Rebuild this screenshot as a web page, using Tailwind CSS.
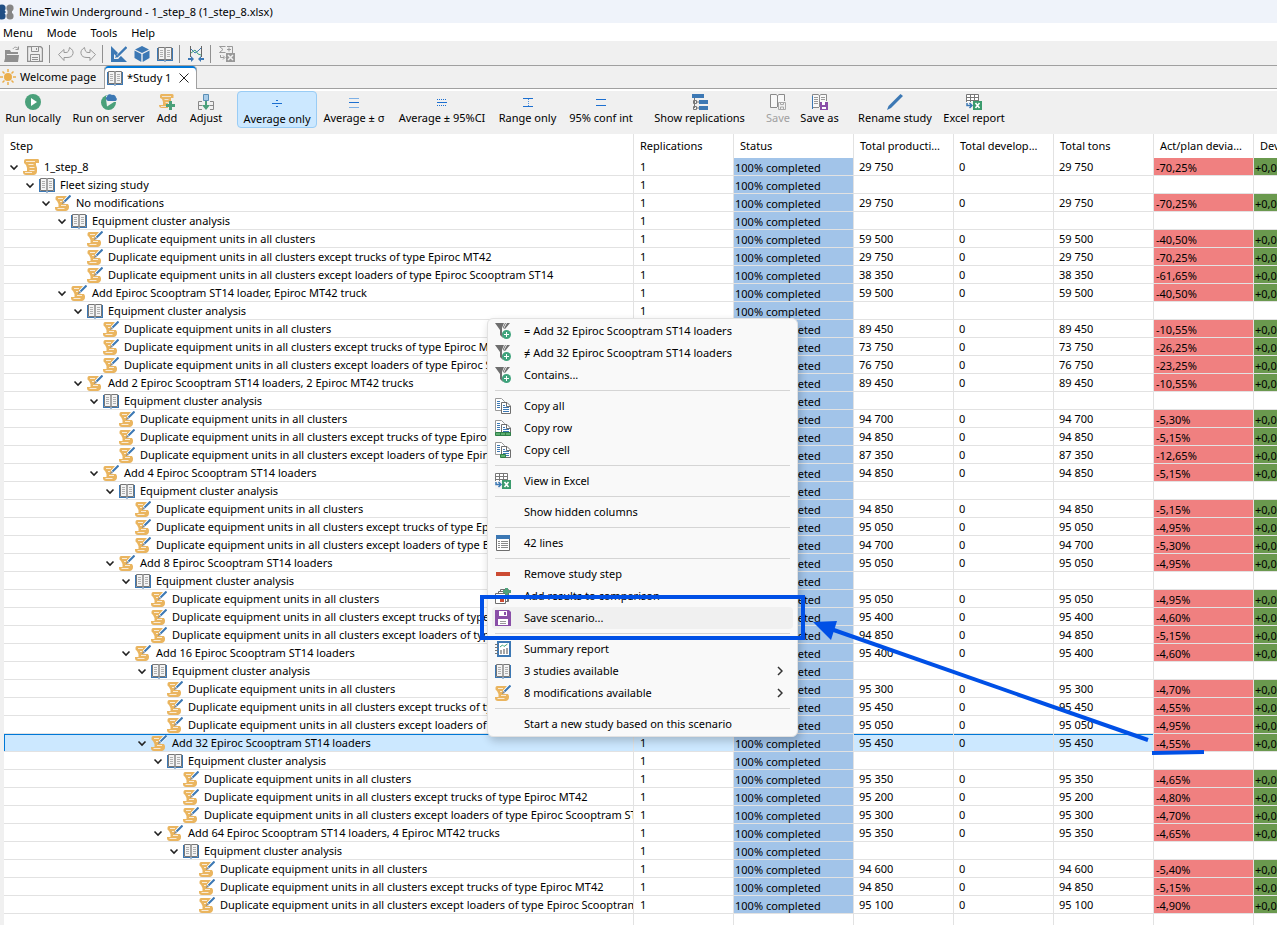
<!DOCTYPE html>
<html lang="en">
  <head>
    <meta charset="UTF-8" />
    <meta name="viewport" content="width=device-width, initial-scale=1.0" />
    <title>MineTwin Underground</title>
    <script src="https://cdn.jsdelivr.net/npm/@tailwindcss/browser@4"></script>
  </head>

  <body
    class="h-screen flex flex-col overflow-hidden bg-white font-['Noto_Sans','Open_Sans',sans-serif] text-[11px] leading-4 text-black"
  >
    <!-- icon sprites -->
    <svg class="hidden">
      <symbol id="scroll" viewBox="0 0 16 16">
        <path fill="#eab55f" d="M3 0h11.500a1.500 1.500 0 0 1 1.500 2v2h-3v2l1 3v3a4 4 0 0 1-3 4H3a3 3 0 0 1-3-3v-1h4V9L3 6 1 4V2a2 2 0 0 1 2-2z" />
        <path stroke="#fff" stroke-opacity=".75" fill="none" d="M3 2.500h9M5.500 5.500h5M6.500 8.500h5M6.500 11.500h5M2 13.500h7" />
      </symbol>
      <symbol id="mod" viewBox="0 0 16 16">
        <path fill="#eab55f" d="M3 1h9L8 6v3h5l1 2v1a4 4 0 0 1-3 4H3a3 3 0 0 1-3-3v-1h3.500V9L2 6 .500 4.500V3A2 2 0 0 1 3 1z" />
        <path stroke="#fff" stroke-opacity=".75" fill="none" d="M3 3.500h5M5 6.500h2M6 10.500h5M2.500 13.500h7" />
        <path stroke="#fff" stroke-width="3.500" fill="none" d="M15.500 .5 9 7" />
        <path stroke="#3c78b4" stroke-width="2" fill="none" d="M15.500 .5 9.500 6.500" />
        <path fill="#8a8a8a" d="M7 9l1.200-3 2 2z" />
      </symbol>
      <symbol id="book" viewBox="0 0 16 16">
        <path fill="#3c78b4" d="M0 2h1v12h6l1 1 1-1h6V2h1v13H9l-1 1-1-1H0z" />
        <path fill="#f4f4f4" stroke="#777" d="M1.500 1.500H7l1 .5 1-.5h5.500v12H9l-1 .5-1-.5H1.500z" />
        <path stroke="#8a8a8a" fill="none" d="M8 2v12" stroke-width="1.500" />
        <path stroke="#b0b0b0" fill="none" d="M3 4.500h3M3 6.500h3M3 8.500h3M3 10.500h3M10 4.500h3M10 6.500h3M10 8.500h3M10 10.500h3" />
      </symbol>
      <symbol id="down" viewBox="0 0 10 8">
        <path d="M1.500 2.500 5 6 8.500 2.500" fill="none" stroke="#222" stroke-width="1.600" />
      </symbol>
      <symbol id="filter" viewBox="0 0 16 16">
        <path fill="#6e6e6e" d="M0 0h9L7 5v4l1 6-3-3V7z" />
        <path fill="#6e6e6e" d="M10 0h1L8 6V4zM12 0h3l-5 6-1-.5z" />
        <circle cx="11.500" cy="11.500" r="4.500" fill="#3fa37c" />
        <path stroke="#fff" fill="none" d="M11.500 9v5M9 11.500h5" />
      </symbol>
      <symbol id="copy" viewBox="0 0 16 16">
        <path fill="#fff" stroke="#999" d="M.5.500h6l3 3v9h-9z" />
        <path stroke="#3c78b4" fill="none" d="M2 3.500h3M2 5.500h3M2 7.500h3M2 9.500h3" />
        <path fill="#fff" stroke="#6e6e6e" d="M6.500 4.500h5.500l3.500 3.500v7.500h-9z" />
        <path stroke="#6e6e6e" fill="none" d="M11.500 4.500v4h4" />
        <path stroke="#3c78b4" fill="none" d="M8 7.500h2M8 9.500h6M8 11.500h6M8 13.500h6" />
      </symbol>
      <symbol id="copyrow" viewBox="0 0 16 16">
        <use href="#copy" />
        <path fill="#5cae6f" stroke="#2f8048" d="M.5 12.500h15v3H.500zM5.500 12.500v3M10.500 12.500v3" />
      </symbol>
      <symbol id="copycell" viewBox="0 0 16 16">
        <use href="#copy" />
        <path fill="#5cae6f" stroke="#2f8048" d="M5.500 12.500h5v3h-5z" />
      </symbol>
      <symbol id="excel" viewBox="0 0 16 16">
        <path fill="#fff" stroke="#777" d="M.5.500h12v9H.500zM4.500.500v9M8.500.500v9M.500 3.500h12M.500 6.500h12" />
        <path fill="#f4f4f4" d="M0 8h7v8H0z" />
        <path stroke="#3c78b4" stroke-width="1.500" fill="none" d="M1 9v2.500h4M3.500 9l2.500 2.500L3.500 14" />
        <path fill="#3b9b6d" d="M7 7h9v9H7z" />
        <path stroke="#fff" stroke-width="1.600" fill="none" d="M9.500 9l4 5M13.500 9l-4 5" />
      </symbol>
      <symbol id="lines" viewBox="0 0 16 16">
        <path fill="#fff" stroke="#6e6e6e" d="M1.500 1.500h13v14h-13z" />
        <path fill="#3c78b4" d="M1 0h14v4H1z" />
        <path stroke="#8a8a8a" fill="none" d="M3 6.500h2M6 6.500h7M3 8.500h2M6 8.500h7M3 10.500h2M6 10.500h7M3 12.500h2M6 12.500h7" />
      </symbol>
      <symbol id="minus" viewBox="0 0 16 16">
        <path fill="#cc4b33" d="M1 6h14v4H1z" />
      </symbol>
      <symbol id="results" viewBox="0 0 16 16">
        <path fill="#fff" stroke="#6e6e6e" d="M5.500 1.500h8v12h-8z" />
        <path fill="#fff" stroke="#6e6e6e" d="M3.500 3.500h9v10h-9z" />
        <path fill="#fff" stroke="#6e6e6e" d="M.5 5.500h10v10H.500z" />
        <path fill="#cc4b33" d="M5 11h4v3H5z" />
        <path stroke="#3c78b4" fill="none" d="M2 8.500h5" />
        <path fill="#4fa27b" d="M10 0h3v2h3v3h-3v3h-3V5H8V2h2z" />
      </symbol>
      <symbol id="floppy" viewBox="0 0 16 16">
        <path fill="currentColor" d="M0 0h14l2 2v14H0z" />
        <path fill="#fff" d="M4 1h8v5H4zM3 9h10v6H3z" />
        <path fill="currentColor" d="M9 2h2v3H9z" />
        <path fill="#999" d="M5 11h6v1H5zM5 13h6v1H5z" />
      </symbol>
      <symbol id="report" viewBox="0 0 16 16">
        <path fill="#fff" stroke="#3c78b4" stroke-width="2" d="M3 1h12v14H3z" />
        <path stroke="#777" fill="none" d="M0 3.500h3M0 6.500h3M0 9.500h3M0 12.500h3" />
        <path stroke="#3fa37c" fill="none" d="M5 6l2.500-2L9 5.500 12.500 3" />
        <path stroke="#888" stroke-width="1.500" fill="none" d="M6 13V9M9 13V8M12 13V7" />
      </symbol>
      <symbol id="run" viewBox="0 0 16 16">
        <circle cx="8" cy="8" r="8" fill="#4aa07a" />
        <path fill="#fff" d="M6 4l6 4-6 4z" />
      </symbol>
      <symbol id="server" viewBox="0 0 16 16">
        <circle cx="7.500" cy="8.500" r="7.500" fill="#4aa07a" />
        <path fill="#f0f0f0" d="M5 5h5v3h3l-7 4.500z" />
        <path fill="#f0f0f0" d="M5 5V2l4-2h7v8H8z" />
        <path fill="#3c78b4" d="M7 7a2.500 2.500 0 0 1-1-4.500A3 3 0 0 1 11 1a3 3 0 0 1 4 2.500A2 2 0 0 1 14.500 7z" />
      </symbol>
      <symbol id="add" viewBox="0 0 16 16">
        <path fill="#eab55f" d="M2 0h11a1.500 1.500 0 0 1 1.500 2v2H12v3L9 9v5H3a3 3 0 0 1-3-3h4V8L3 5 1 4V2a2 2 0 0 1 1-2z" />
        <path stroke="#f0f0f0" stroke-opacity=".8" fill="none" d="M3 2.500h9M5.500 5.500h4M6.500 8.500h3M2 12.500h6" />
        <path fill="#4aa07a" d="M10 7h3v3h3v3h-3v3h-3v-3H7v-3h3z" />
      </symbol>
      <symbol id="adjust" viewBox="0 0 16 16">
        <path fill="#a9cce8" stroke="#5b8fb5" d="M5.500.500h5v6h-5z" />
        <path stroke="#888" fill="none" d="M4 7.500H.500v8h15v-8H12M1 11.500h3M12 11.500h3" />
        <path fill="#f0f0f0" d="M4 14h8v2H4z" />
        <path fill="#4aa07a" d="M7 7h2v4h3l-4 5-4-5h3z" />
      </symbol>
      <symbol id="avg" viewBox="0 0 16 16">
        <path fill="#1c6fd0" d="M3 8h10v1H3zM7 5h2v1H7zM7 11h2v1H7z" />
      </symbol>
      <symbol id="sigma" viewBox="0 0 16 16">
        <path fill="#7db0e6" d="M3 4h10v1H3zM3 13h10v1H3z" />
        <path fill="#1c6fd0" d="M3 8h10v1H3z" />
      </symbol>
      <symbol id="ci" viewBox="0 0 16 16">
        <path stroke="#1c6fd0" stroke-dasharray="1 1" d="M3 5.500h10M3 11.500h10" />
        <path fill="#1c6fd0" d="M3 8h10v1H3z" />
      </symbol>
      <symbol id="range" viewBox="0 0 16 16">
        <path fill="#1c6fd0" d="M3 4h10v1H3zM3 12h10v1H3z" />
        <path stroke="#4f92de" stroke-dasharray="1 1" d="M8.500 5v7" />
      </symbol>
      <symbol id="conf" viewBox="0 0 16 16">
        <path fill="#1c6fd0" d="M3 5h10v1H3zM3 11h10v1H3z" />
      </symbol>
      <symbol id="repl" viewBox="0 0 16 16">
        <path fill="#3c78b4" d="M0 0h12v4H0zM7 6h9v4H7zM7 12h9v4H7z" />
        <path stroke="#777" fill="none" d="M2.500 4v10M1.500 6.500h3v3h-3zM1.500 12.500h3v3h-3zM5 8h2M5 14h2" />
      </symbol>
      <symbol id="booksave" viewBox="0 0 16 16">
        <path fill="#f8f8f8" stroke="#8a8a8a" d="M7 13.500H.500V.500H6l1.500 1L9 .500h5.500V7M7.500 1.500V13" />
      </symbol>
      <symbol id="save" viewBox="0 0 16 16">
        <use href="#booksave" />
        <path fill="#f0f0f0" stroke="#aaa" d="M8.500 8.500h7v7h-7zM10.500 8.500v2h3v-2M10.500 15.500v-2.500h3v2.500" />
      </symbol>
      <symbol id="saveas" viewBox="0 0 16 16">
        <use href="#booksave" />
        <path stroke="#3c78b4" d="M.5 2v13" />
        <path stroke="#999" d="M2 3.500h4M2 5.500h4M2 7.500h4M2 9.500h4M9 3.500h4M9 5.500h4" />
        <path fill="#8a4fa8" d="M8 8h8v8H8z" />
        <path fill="#fff" d="M10 8h3v3h-3zM10 13h4v2h-4z" />
      </symbol>
      <symbol id="rename" viewBox="0 0 16 16">
        <path fill="#3c78b4" d="M13.500 0l2.500 2L4 14l-4 2 1.500-4z" />
      </symbol>
      <symbol id="sun" viewBox="0 0 16 16">
        <circle cx="8" cy="8" r="4" fill="#eaae4c" />
        <path stroke="#eaae4c" stroke-width="1.500" d="M8 0v3M8 13v3M0 8h3M13 8h3M2.500 2.500l2 2M11.500 11.500l2 2M13.500 2.500l-2 2M4.500 11.500l-2 2" />
      </symbol>
      <symbol id="open" viewBox="0 0 16 16">
        <path fill="#8f8f8f" d="M1 4h5l1 2h7v2H3l-2 5zM2 9h13l-1 7H0z" />
        <path stroke="#999" fill="none" d="M9 3c1-2 3-2.500 5-.5M14.500.500v3h-3" />
      </symbol>
      <symbol id="savegray" viewBox="0 0 16 16">
        <path fill="#eee" stroke="#8f8f8f" d="M.5.500h13l2 2v13H.500z" stroke-width="1.400" />
        <path fill="#eee" stroke="#8f8f8f" d="M4.500.500h7v5h-7zM9.500 2v2M3.500 8.500h9v7h-9zM5 11.500h6M5 13.500h6" />
      </symbol>
      <symbol id="undo" viewBox="0 0 16 16">
        <path fill="#f0f0f0" stroke="#999" d="M.5 8.500 6 3.500v3h2c2 0 3-1.500 3.500-5 3 2 4 4 3.500 6-.5 3-3 4-6 4H6v3z" />
      </symbol>
      <symbol id="draft" viewBox="0 0 16 16">
        <path fill="#3c78b4" fill-rule="evenodd" d="M0 0l16 16H0zM3 8v5h5z" />
        <path stroke="#f0f0f0" stroke-width="4" d="M16 1 6 11" />
        <path stroke="#3c78b4" stroke-width="2.400" d="M15.500 1 7 9.500" />
        <path fill="#3c78b4" d="M4 12l1.500-4 2.500 2.500z" />
      </symbol>
      <symbol id="cube" viewBox="0 0 16 16">
        <path fill="#3c78b4" d="M8 0l7 3.500L8 7 1 3.500zM.5 4.500 7.300 8v8L.500 12zM15.500 4.500 8.700 8v8l6.800-4z" />
      </symbol>
      <symbol id="compare" viewBox="0 0 16 16">
        <path stroke="#666" fill="none" d="M2.500 0v11M13.500 0v11" />
        <path stroke="#3c78b4" fill="none" d="M3 3l4 4 3-2 3-3" />
        <path stroke="#3fa37c" fill="none" d="M3 7l4-3 3 4 3 1" />
        <path fill="#3c78b4" d="M0 12h3v-2l3 3-3 3v-2H0zM16 12h-3v-2l-3 3 3 3v-2h3z" />
      </symbol>
      <symbol id="calc" viewBox="0 0 16 16">
        <path stroke="#999" fill="none" d="M6.500.500h-6L4 3.500.500 6.500h6M8 3.500h4M10 1.500v4M1.500 9v2.500H5M4 9.500l2 2-2 2M8 .500h5.500V7" />
        <path fill="#999" d="M7 7h9v9H7z" />
        <path stroke="#f0f0f0" stroke-width="1.500" d="M9 9l5 5M14 9l-5 5" />
      </symbol>
    </svg>

    <!-- title bar -->
    <header class="flex items-center h-[23px] shrink-0 gap-[5px] bg-[#eff3fa]">
      <svg class="w-[14px] h-4" viewBox="0 0 14 16">
        <g fill="#1f4e84">
          <circle cx="2" cy="4" r="3.600" />
          <circle cx="2" cy="12" r="3.600" />
          <path d="M0 5h3l3 3-3 3H0z" />
        </g>
        <g fill="#858585">
          <circle cx="10" cy="4" r="3.600" />
          <circle cx="10" cy="12" r="3.600" />
          <path d="M7 8l3-3h2v6h-2z" />
        </g>
      </svg>
      <h1>MineTwin Underground - 1_step_8 (1_step_8.xlsx)</h1>
    </header>

    <nav class="flex h-[18px] shrink-0 items-end gap-[14px] pl-[3px] bg-white">
      <button>Menu</button>
      <button>Mode</button>
      <button>Tools</button>
      <button>Help</button>
    </nav>

    <div class="flex h-[25px] shrink-0 items-center pt-px pl-1 bg-[#f0f0f0] border-b border-[#a0a0a0]">
      <div class="flex gap-[7px]">
        <button aria-label="Open"><svg class="size-4"><use href="#open" /></svg></button>
        <button aria-label="Save"><svg class="size-4"><use href="#savegray" /></svg></button>
      </div>
      <span class="w-px h-[18px] mx-[6px] bg-[#909090]"></span>
      <div class="flex gap-[6px] pl-[2px]">
        <button aria-label="Undo"><svg class="size-4"><use href="#undo" /></svg></button>
        <button aria-label="Redo"><svg class="size-4 -scale-x-100"><use href="#undo" /></svg></button>
      </div>
      <span class="w-px h-[18px] mx-[6px] bg-[#909090]"></span>
      <div class="flex gap-[7px] pl-[2px]">
        <button aria-label="Layout"><svg class="size-4"><use href="#draft" /></svg></button>
        <button aria-label="3D view"><svg class="size-4"><use href="#cube" /></svg></button>
        <button aria-label="Study"><svg class="size-4"><use href="#book" /></svg></button>
      </div>
      <span class="w-px h-[18px] mx-[6px] bg-[#909090]"></span>
      <button class="pl-[2px]" aria-label="Compare"><svg class="size-4"><use href="#compare" /></svg></button>
      <span class="w-px h-[18px] mx-[6px] bg-[#909090]"></span>
      <button class="pl-[2px]" aria-label="Export"><svg class="size-4"><use href="#calc" /></svg></button>
    </div>

    <!-- tabs -->
    <div class="flex h-[23px] shrink-0 bg-[#f0f0f0]">
      <button class="flex items-center w-[104px] gap-1 border-b border-[#a0a0a0] whitespace-nowrap">
        <svg class="size-4"><use href="#sun" /></svg>Welcome page
      </button>
      <button class="flex items-center w-[93px] gap-1 pl-[2px] bg-white border-x border-[#a0a0a0] rounded-t-sm shadow-[inset_0_2px_#0078d7] whitespace-nowrap">
        <svg class="size-4"><use href="#book" /></svg>*Study 1
        <svg class="size-[10px] ml-1" viewBox="0 0 10 10"><path d="M.5.500l9 9M9.500.500l-9 9" stroke="#222" /></svg>
      </button>
      <div class="grow border-b border-[#a0a0a0]"></div>
    </div>

    <!-- study toolbar -->
    <div id="toolbar" class="flex h-[45px] shrink-0 bg-[#f0f0f0] border-t-2 border-white"></div>

    <main class="grow min-h-0 overflow-hidden pl-1 bg-[#f0f0f0]">
      <table class="w-full h-full table-fixed border-separate border-spacing-0 bg-white">
        <colgroup>
          <col class="w-[630px]" />
          <col class="w-[100px]" />
          <col class="w-[120px]" />
          <col class="w-[100px]" />
          <col class="w-[100px]" />
          <col class="w-[100px]" />
          <col class="w-[100px]" />
          <col />
        </colgroup>
        <thead>
          <tr id="head"></tr>
        </thead>
        <tbody id="rows"></tbody>
      </table>
    </main>

    <!-- context menu -->
    <div
      id="menu"
      role="menu"
      class="absolute left-[487px] top-[318px] w-[311px] flex flex-col px-1 py-px rounded-md border border-[#e2e2e2] bg-[#f9f9f9] shadow-[2px_4px_8px_#00000033]"
    ></div>

    <!-- callout -->
    <svg class="absolute left-0 top-0 w-[1277px] h-[925px] pointer-events-none" fill="none" stroke="#0050e6">
      <rect x="482" y="597" width="321" height="41" stroke-width="4" />
      <path d="M1148 740 828 628" stroke-width="4" />
      <path d="M1152 753 1204 752" stroke-width="4" />
      <path d="M813 622l24-1-6 19z" fill="#0050e6" stroke="none" />
    </svg>

    <script>
      const toolbar = [
        ["w-[66px]", "run", "Run locally"],
        ["w-[85px]", "server", "Run on server"],
        ["w-[32px]", "add", "Add"],
        ["w-[46px]", "adjust", "Adjust"],
        ["w-[80px] ml-2 rounded-sm border border-[#99ccf5] bg-[#cce8ff]", "avg", "Average only"],
        ["w-[74px]", "sigma", "Average ± σ"],
        ["w-[102px]", "ci", "Average ± 95%CI"],
        ["w-[69px]", "range", "Range only"],
        ["w-[78px]", "conf", "95% conf int"],
        ["w-[103px] ml-2", "repl", "Show replications"],
        ["w-[34px] ml-[10px] text-[#a0a0a0]", "save", "Save"],
        ["w-[49px]", "saveas", "Save as"],
        ["w-[86px] ml-2", "rename", "Rename study"],
        ["w-[72px]", "excel", "Excel report"],
      ];

      const heads = ["Step", "Replications", "Status", "Total production", "Total development", "Total tons", "Act/plan deviation", "Dev"];

      const study = "Equipment cluster analysis";
      const rows = [
        [0, "scroll", "1_step_8", "29 750", "-70,25%"],
        [1, "book", "Fleet sizing study"],
      ];

      // step name followed by its own result and the three duplicated variants
      function addStep(depth, name, results) {
        const dup = "Duplicate equipment units in all clusters";
        rows.push([depth, "mod", name, ...results[0]]);
        rows.push([depth + 1, "book", study]);
        rows.push([depth + 2, "mod", dup, ...results[1]]);
        rows.push([depth + 2, "mod", dup + " except trucks of type Epiroc MT42", ...results[2]]);
        rows.push([depth + 2, "mod", dup + " except loaders of type Epiroc Scooptram ST14", ...results[3]]);
      }

      addStep(2, "No modifications", [["29 750", "-70,25%"], ["59 500", "-40,50%"], ["29 750", "-70,25%"], ["38 350", "-61,65%"]]);
      addStep(3, "Add Epiroc Scooptram ST14 loader, Epiroc MT42 truck", [["59 500", "-40,50%"], ["89 450", "-10,55%"], ["73 750", "-26,25%"], ["76 750", "-23,25%"]]);
      addStep(4, "Add 2 Epiroc Scooptram ST14 loaders, 2 Epiroc MT42 trucks", [["89 450", "-10,55%"], ["94 700", "-5,30%"], ["94 850", "-5,15%"], ["87 350", "-12,65%"]]);
      addStep(5, "Add 4 Epiroc Scooptram ST14 loaders", [["94 850", "-5,15%"], ["94 850", "-5,15%"], ["95 050", "-4,95%"], ["94 700", "-5,30%"]]);
      addStep(6, "Add 8 Epiroc Scooptram ST14 loaders", [["95 050", "-4,95%"], ["95 050", "-4,95%"], ["95 400", "-4,60%"], ["94 850", "-5,15%"]]);
      addStep(7, "Add 16 Epiroc Scooptram ST14 loaders", [["95 400", "-4,60%"], ["95 300", "-4,70%"], ["95 450", "-4,55%"], ["95 050", "-4,95%"]]);
      addStep(8, "Add 32 Epiroc Scooptram ST14 loaders", [["95 450", "-4,55%"], ["95 350", "-4,65%"], ["95 200", "-4,80%"], ["95 300", "-4,70%"]]);
      addStep(9, "Add 64 Epiroc Scooptram ST14 loaders, 4 Epiroc MT42 trucks", [["95 350", "-4,65%"], ["94 600", "-5,40%"], ["94 850", "-5,15%"], ["95 100", "-4,90%"]]);

      const menu = [
        ["filter", "= Add 32 Epiroc Scooptram ST14 loaders"],
        ["filter", "≠ Add 32 Epiroc Scooptram ST14 loaders"],
        ["filter", "Contains..."],
        null,
        ["copy", "Copy all"],
        ["copyrow", "Copy row"],
        ["copycell", "Copy cell"],
        null,
        ["excel", "View in Excel"],
        null,
        ["", "Show hidden columns"],
        null,
        ["lines", "42 lines"],
        null,
        ["minus", "Remove study step"],
        ["results", "Add results to comparison"],
        ["floppy", "Save scenario...", "bg-[#f0f0f0]"],
        null,
        ["report", "Summary report"],
        ["book", "3 studies available", "", true],
        ["mod", "8 modifications available", "", true],
        null,
        ["", "Start a new study based on this scenario"],
      ];

      const icon = (id) => `<svg class="size-4 shrink-0 text-[#8a4fa8]">${id ? `<use href="#${id}" />` : ""}</svg>`;

      document.getElementById("toolbar").innerHTML = toolbar
        .map(([cls, id, label]) => `
          <button class="flex flex-col items-center h-[37px] pt-[3px] shrink-0 whitespace-nowrap ${cls}" ${label === "Save" ? "disabled" : ""}>
            ${icon(id)}<span>${label}</span>
          </button>`)
        .join("");

      document.getElementById("head").innerHTML = heads
        .map((h) => `<th class="h-6 p-0 pl-[6px] pr-[10px] border-r border-[#e2e2e2] text-left font-normal truncate last:pr-0 last:border-r-0 last:text-clip">${h}</th>`)
        .join("");

      const cell = "h-[18px] p-0 border-b border-r last:border-r-0 border-[#e2e2e2] whitespace-nowrap overflow-hidden";
      const plain = cell + " leading-[17px]";
      // painted cells sit a pixel lower than the plain ones
      const painted = cell + " pt-[2px] leading-[15px]";

      document.getElementById("rows").innerHTML =
        rows
          .map(([depth, id, name, tons, dev], i) => {
            const selected = name.startsWith("Add 32");
            const sel = selected ? "bg-[#cce8ff] shadow-[inset_0_1px_#0078d7]" : "";
            const next = rows[i + 1];
            const open = next && next[0] > depth;
            return `
              <tr>
                <td class="${plain} ${selected ? "bg-[#cce8ff] shadow-[inset_1px_1px_#0078d7]" : ""}">
                  <div class="flex items-center h-[17px] overflow-hidden" style="padding-left: ${5 + depth * 16}px">
                    <svg class="w-[10px] h-2 mr-1 shrink-0">${open ? '<use href="#down" />' : ""}</svg>
                    ${icon(id)}<span class="ml-[5px]">${name}</span>
                  </div>
                </td>
                <td class="${plain} pl-[6px] ${sel}">1</td>
                <td class="${painted} pl-px bg-[#a2c4e9]">100% completed</td>
                <td class="${plain} pl-[5px] ${sel}">${tons || ""}</td>
                <td class="${plain} pl-[5px] ${sel}">${tons ? "0" : ""}</td>
                <td class="${plain} pl-[5px] ${sel}">${tons || ""}</td>
                <td class="${painted} pl-[2px] ${dev ? "bg-[#f08080]" : ""}">${dev || ""}</td>
                <td class="${painted} pl-px ${dev ? "bg-[#6a994e]" : ""}">${dev ? "+0,00%" : ""}</td>
              </tr>`;
          })
          .join("") +
        `<tr class="h-full">${'<td class="p-0 border-r border-[#e2e2e2] last:border-r-0"></td>'.repeat(8)}</tr>`;

      document.getElementById("menu").innerHTML = menu
        .map((item) => {
          if (!item) return '<hr class="mx-[3px] my-1 border-[#d5d5d5]" />';
          const [id, label, cls, sub] = item;
          return `
            <button role="menuitem" class="flex items-center h-[22px] pl-[3px] pr-[10px] gap-[13px] rounded-sm text-left ${cls || ""}">
              ${icon(id)}<span class="grow">${label}</span>
              ${sub ? '<svg class="w-[6px] h-[10px]" viewBox="0 0 6 10"><path d="M1 1l4 4-4 4" fill="none" stroke="#333" stroke-width="1.500" /></svg>' : ""}
            </button>`;
        })
        .join("");
    </script>
  </body>
</html>
